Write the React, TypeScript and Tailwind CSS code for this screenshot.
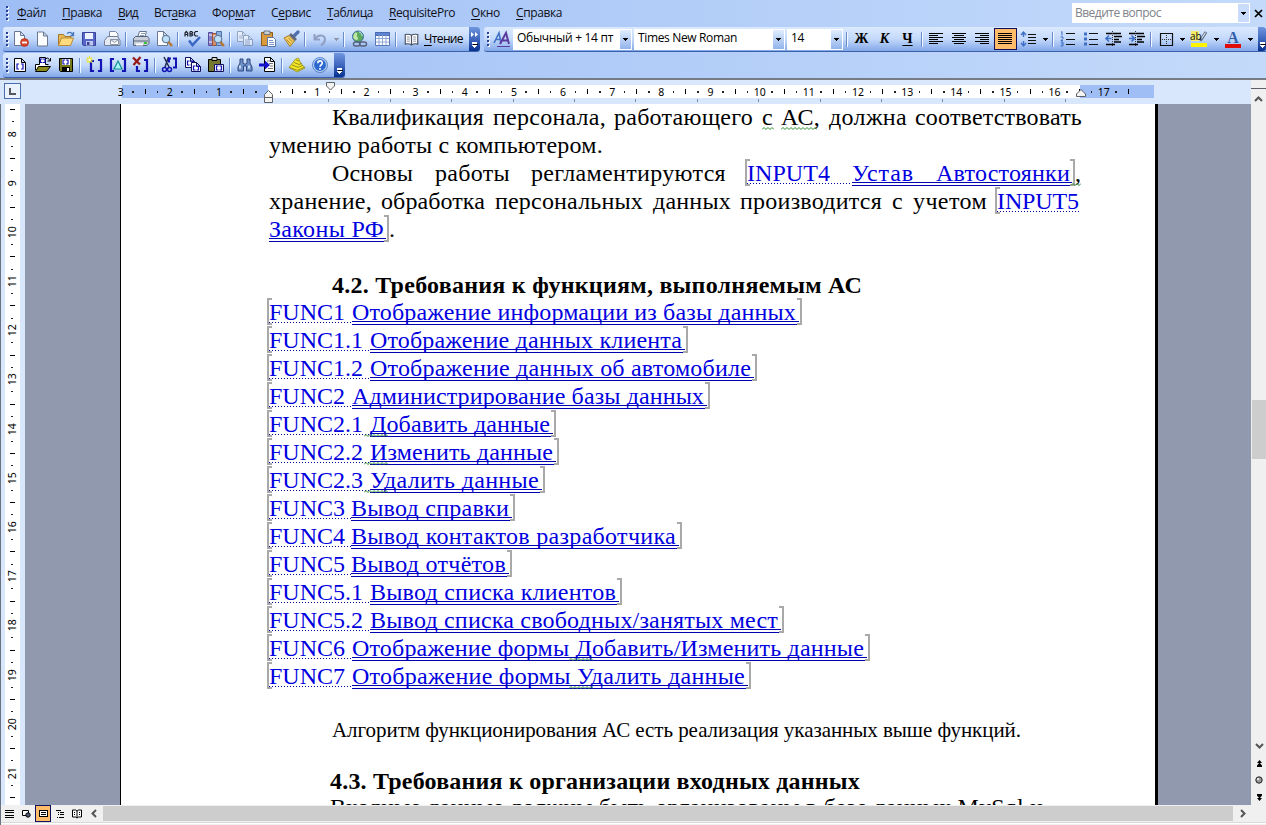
import { useLayoutEffect, useRef } from "react";
import type { ReactNode } from "react";

/* Spreads its text over the width that its class gives. */
function Fit({ className, children }: { className: string; children: ReactNode }) {
  const outer = useRef<HTMLSpanElement>(null);
  const inner = useRef<HTMLSpanElement>(null);
  useLayoutEffect(() => {
    const o = outer.current;
    const i = inner.current;
    if (!o || !i) return;
    i.style.letterSpacing = "0px";
    const count = (i.textContent || "").length || 1;
    const gap = o.getBoundingClientRect().width - i.getBoundingClientRect().width;
    i.style.letterSpacing = `${gap / count}px`;
  });
  return (
    <span ref={outer} className={`inline-block shrink-0 whitespace-pre ${className}`}>
      <span ref={inner} className="inline-block whitespace-pre">{children}</span>
    </span>
  );
}

function U({ children }: { children: ReactNode }) {
  return <span className="underline underline-offset-2">{children}</span>;
}

function Handle() {
  return (
    <span className="flex w-[7px] shrink-0 flex-col items-center gap-[2px] self-center">
      {[0, 1, 2, 3].map((n) => (
        <span key={n} className="h-[2px] w-[2px] bg-[#27419a] shadow-[1px_1px_0_#fff]" />
      ))}
    </span>
  );
}

function Sep() {
  return (
    <span className="flex w-[6px] shrink-0 justify-center self-center">
      <span className="h-[15px] w-px bg-[#6a8ccb]" />
      <span className="h-[15px] w-px bg-[#f1f9ff]" />
    </span>
  );
}

function Slot({ children, className = "w-[23px]" }: { children: ReactNode; className?: string }) {
  return <span className={`flex shrink-0 items-center justify-center ${className}`}>{children}</span>;
}

function Down({ dim = false }: { dim?: boolean }) {
  return (
    <svg width="5" height="3" viewBox="0 0 5 3" shapeRendering="crispEdges">
      <path d="M0 0h5L2.5 3z" fill={dim ? "#8d96aa" : "#000"} />
    </svg>
  );
}

function Drop({ dim = false }: { dim?: boolean }) {
  return <Slot className="w-[10px]"><Down dim={dim} /></Slot>;
}

function Svg({ children, size = 18 }: { children: ReactNode; size?: number }) {
  return <svg width={size} height={size} viewBox="0 0 18 18" fill="none">{children}</svg>;
}

function Cap({ chevrons = false, className = "w-[11px]" }: { chevrons?: boolean; className?: string }) {
  return (
    <span className={`flex shrink-0 flex-col items-center justify-between self-stretch rounded-r-[3px] bg-linear-to-b from-[#7096df] via-[#3f67bd] to-[#05318f] pb-[2px] pt-[5px] ${className}`}>
      <svg width="8" height="5" viewBox="0 0 8 5">
        {chevrons && <path d="M0 0l3 2.5L0 5zM4 0l3 2.5L4 5z" fill="#fff" />}
      </svg>
      <svg width="7" height="7" viewBox="0 0 7 7" shapeRendering="crispEdges">
        <path d="M1 0h5v1.500H1zM1 3h5L3.500 6z" fill="#fff" />
        <path d="M2 1.500h5v1H2z" fill="#000" />
      </svg>
    </span>
  );
}

const Page = ({ x = 3.5, y = 2.500, w = 11, h = 13, s = "#6b7890" }: { x?: number; y?: number; w?: number; h?: number; s?: string }) => (
  <path d={`M${x} ${y}h${w - 4}l4 4v${h - 4}h-${w}zM${x + w - 4} ${y}v4h4`} fill="#fbfdff" stroke={s} />
);

const Brackets = ({ x = 6, y = 7, s = 5 }: { x?: number; y?: number; s?: number }) => (
  <path d={`M${x + 2} ${y}h-2v${s}h2M${x + s - 1} ${y}h2v${s}h-2`} stroke="#1414b4" strokeWidth="1.2" />
);

function Lens() {
  return (
    <>
      <circle cx="11" cy="9" r="3.700" fill="#bfe0fa" stroke="#66809c" strokeWidth="1.200" />
      <path d="M13.500 12l3.500 4" stroke="#b4762d" strokeWidth="2.400" />
    </>
  );
}

const standardIcons = {
  permission: (
    <Svg><Page x={2.5} y={1.5} w={10} h={14} /><circle cx="12.500" cy="12.500" r="4" fill="#d8432a" stroke="#a52812" strokeWidth=".6" /><path d="M10 12.500h5" stroke="#fff" strokeWidth="1.800" /></Svg>
  ),
  blank: <Svg><Page x={3.5} y={2} w={10} h={14} /></Svg>,
  open: (
    <Svg>
      <path d="M1.500 15.500v-11h5l1.500 2h6v3" fill="#e8ba53" stroke="#a7772d" />
      <path d="M1.500 15.500l3-7.500h12l-3 7.500z" fill="#ffdb7f" stroke="#b98a36" />
      <path d="M10 3.500c3-2 5-1 6 1.500m.5-3v3.500h-3" stroke="#4777b9" strokeWidth="1.300" />
    </Svg>
  ),
  save: (
    <Svg>
      <path d="M2.500 2.500h13v13h-12l-1-1z" fill="#5565c8" stroke="#3b4197" />
      <path d="M5 3h8v6H5z" fill="#eef2ff" /><path d="M6 11h7v4.500H6z" fill="#c2c8ea" /><path d="M7 12h2.500v3H7z" fill="#3b4197" />
    </Svg>
  ),
  mail: (
    <Svg>
      <path d="M6.500 7V1.500h6l2.500 2.500v4" fill="#fff" stroke="#7b88a4" />
      <path d="M1.500 10.500l3-4h10l2.500 4v5h-15.500z" fill="#e5e9f2" stroke="#737f98" />
      <path d="M7.500 9.500h8v5h-8zM7.500 9.500l4 3 4-3" fill="#fff" stroke="#8a93a8" />
    </Svg>
  ),
  print: (
    <Svg>
      <path d="M5.500 8l2-6.500h7l-2 6.500" fill="#fff" stroke="#68758d" />
      <path d="M1.500 8.500l2-2h12l1.500 2v5l-2 2h-13.500z" fill="#c9d0dc" stroke="#56627a" />
      <path d="M2 11h14" stroke="#56627a" /><path d="M9 3.500h4M8 5.500h4" stroke="#8e9db8" /><path d="M12 12h3v2h-3z" fill="#35c437" /><path d="M4 13.500h7v2H4z" fill="#fff" />
    </Svg>
  ),
  preview: <Svg><Page x={2.5} y={1.5} w={10} h={14} /><Lens /></Svg>,
  spell: (
    <Svg>
      <path d="M5 10.500l3.500 4.500L16 7" stroke="#3b67c4" strokeWidth="2.500" />
      <path d="M1 6.500V3l1.300-1.500L3.700 3v3.500M1 4.500h2.700M6 1.500v4.500h1.700l1-1-1-1.200H6M7.700 3.700l1-1-1-1.200H6M14 1.500h-2.500L10.500 3v2l1 1H14" stroke="#1d222e" strokeWidth="1.200" />
    </Svg>
  ),
  research: (
    <Svg>
      <path d="M1.500 2.500h4v13h-4z" fill="#8580cb" stroke="#574f9e" /><path d="M5.500 3.500h4v12h-4z" fill="#d88c63" stroke="#97543a" />
      <path d="M9.500 1.500h5v14h-5z" fill="#8eb1e4" stroke="#4f70a8" /><path d="M2 5h3M2 12h3M6 6h3" stroke="#fff" /><Lens />
    </Svg>
  ),
  copy: (
    <Svg><g opacity=".55"><Page x={1.5} y={1.5} w={9} h={10} /><Page x={7.5} y={5.5} w={9} h={10} /><path d="M3 6h4M3 8h4M9 10h5M9 12h5M9 14h5" stroke="#7f8aa2" /></g></Svg>
  ),
  paste: (
    <Svg>
      <path d="M2.500 2.500h11v13h-11z" fill="#d99b3c" stroke="#8d5d1d" /><path d="M5 1h6v3.500H5z" fill="#c9ced7" stroke="#596272" strokeWidth=".8" />
      <path d="M8.500 7.500h6l2 2v7h-8z" fill="#fff" stroke="#5b77a8" /><path d="M10 10.500h4M10 12.500h5M10 14.500h5" stroke="#7b97c9" />
    </Svg>
  ),
  painter: (
    <Svg>
      <path d="M16 2l-4 4" stroke="#4f6fae" strokeWidth="3.200" strokeLinecap="round" />
      <path d="M2 8l5-2.500 5.500 5.500L8 16.500z" fill="#f3cf63" stroke="#a67c22" />
      <path d="M4.500 9.500l4.500 4.500M6.500 8l4 4" stroke="#b78a2c" /><path d="M8 4l6 6" stroke="#60677a" strokeWidth="2.600" />
    </Svg>
  ),
  undo: <Svg><path d="M3.500 4v5.500h5.500M4 9c3-5 10-4.500 10 .5 0 3-2 4.500-4 6" stroke="#8f9fc2" strokeWidth="2" /></Svg>,
  link: (
    <Svg>
      <circle cx="8" cy="6.500" r="5.500" fill="#5aa95c" stroke="#3c6da2" /><path d="M4 4c2-3 4-1 3 1s2 2 1 4-4 1-5-2z" fill="#bfe6a7" />
      <path d="M9 2c2 0 3 2 3 4" stroke="#cdeaff" /><rect x="3.500" y="12" width="6.500" height="4" rx="2" stroke="#56627a" strokeWidth="1.400" /><rect x="9.500" y="12" width="7" height="4" rx="2" stroke="#56627a" strokeWidth="1.400" />
    </Svg>
  ),
  table: (
    <Svg>
      <path d="M2.500 2.500h14v13h-14z" fill="#fff" stroke="#5977b9" /><path d="M2.500 2.500h14v3h-14z" fill="#5f86d3" stroke="#4a6bb4" />
      <path d="M6 5v10M9.500 5v10M13 5v10M3 8.500h13M3 12h13" stroke="#8fa9d8" />
    </Svg>
  ),
  book: (
    <Svg size={15}>
      <path d="M9 4C7 2.500 4 2.500 1.500 3v11.500c2.500-.6 5.500-.500 7.500 1 2-1.500 5-1.600 7.500-1V3C14 2.500 11 2.500 9 4zM9 4v11" fill="#fff" stroke="#4a5263" strokeWidth="1.400" />
      <path d="M3.500 6h3.500M3.500 8.500h3.500M3.500 11h3.500M11 6h3.500M11 8.500h3.500M11 11h3.500" stroke="#7b8495" />
    </Svg>
  ),
};

const reqIcons = {
  doc: <Svg><Page x={2.5} y={2.5} w={11} h={13} s="#000" /><Brackets x={5} y={8} s={5} /></Svg>,
  open: (
    <Svg>
      <path d="M1.500 14V8.500h4v-7h6v7h3" fill="#fff" stroke="#000" /><Brackets x={6.5} y={3} s={3.500} />
      <path d="M1.500 15.500l3-5h12l-4 5z" fill="#8a8a19" stroke="#000" /><path d="M12 2.500c2-1 3 0 3.500 2m1-2.500v3h-3" stroke="#000" />
    </Svg>
  ),
  save: (
    <Svg><path d="M2.500 2.500h13v13h-12l-1-1z" fill="#777817" stroke="#000" /><path d="M5 3h8v6H5z" fill="#fff" /><Brackets x={6} y={4} s={4} /><path d="M5 11h8v5H5z" fill="#000" /><path d="M10 12h2v3h-2z" fill="#fff" /></Svg>
  ),
  create: (
    <Svg><path d="M8 5H5v10h3M12 4h3v11h-3" stroke="#1414b4" strokeWidth="2.200" /><path d="M0 4h7M3.500 0v7M1 1.500l5 5M6 1.500l-5 5" stroke="#e8e337" strokeWidth="1.200" /><circle cx="3.500" cy="4" r="1.200" fill="#fff" /></Svg>
  ),
  props: (
    <Svg><path d="M5 3H2v12h3M13 3h3v12h-3" stroke="#1414b4" strokeWidth="2.200" /><path d="M9 5l4 8H5z" fill="#a8f4f4" stroke="#168f94" strokeWidth="1.200" /></Svg>
  ),
  remove: (
    <Svg><path d="M8 15H5v-5M12 4h3v11h-3" stroke="#1414b4" strokeWidth="2.200" /><path d="M1 1.500l7 7M8.500 1l-7 8" stroke="#981818" strokeWidth="2.200" /></Svg>
  ),
  cut: (
    <Svg><path d="M3 1l5 10M7.500 1L4 11" stroke="#222a55" strokeWidth="1.500" /><circle cx="3.500" cy="13.500" r="2" stroke="#1414b4" strokeWidth="1.500" /><circle cx="8.500" cy="13.500" r="2" stroke="#1414b4" strokeWidth="1.500" /><path d="M10 2.500H8v4M12 2.500h3v9h-3" stroke="#1414b4" strokeWidth="2" /></Svg>
  ),
  copy: (
    <Svg><Page x={1.5} y={1.5} w={9} h={10} s="#10105c" /><Brackets x={3.500} y={5} s={4} /><Page x={7.5} y={6.5} w={9} h={9} s="#10105c" /><Brackets x={9.500} y={10} s={4} /></Svg>
  ),
  paste: (
    <Svg><path d="M1.500 3.500h12v12h-12z" fill="#777830" stroke="#000" /><path d="M5 1.500h5v3H5z" fill="#d7d7c5" stroke="#000" /><path d="M7.500 8.500h9v7h-9z" fill="#fff" stroke="#10105c" /><Brackets x={9.500} y={10} s={4} /></Svg>
  ),
  find: (
    <Svg><path d="M4 3h3v4l1 1h2l1-1V3h3v4l2 4v4h-5.500v-5h-3v5H2v-4l2-4z" fill="#6e90c8" stroke="#2f4880" /><path d="M4 9.500v3M13 9.500v3" stroke="#e4efff" strokeWidth="1.500" /></Svg>
  ),
  goto: (
    <Svg><Page x={5.5} y={1.5} w={10} h={14} s="#000" /><path d="M8 5h4M10 7.500h4M11 10h3M9 12.500h5" stroke="#777" /><path d="M0 7.500h6V4.500L11 9l-5 4.500v-3H0z" fill="#1414d0" /></Svg>
  ),
  pro: (
    <Svg>
      <path d="M1 11.500L7.500 3l3-1 2 5 4.500 5-8 4z" fill="#f4e628" stroke="#8b8421" strokeWidth=".7" />
      <path d="M1.500 11.500l8 2.800L17 11M4 9l6 2.300 5-2M6 6.500l5 2 3-1.300M8 4l3 1" stroke="#8d8618" strokeWidth=".9" />
    </Svg>
  ),
  help: (
    <Svg><circle cx="9" cy="9" r="6.700" fill="#2d68cf" stroke="#b6d0f4" strokeWidth="1.500" /><circle cx="9" cy="9" r="7.500" stroke="#3467b4" strokeWidth=".7" /><path d="M6.800 7.200c0-3 4.500-3 4.500-.3C11.300 8.800 9 8.800 9 10.800M9 12v1.700" stroke="#fff" strokeWidth="1.600" /></Svg>
  ),
};

function Lines({ rows, color = "#000" }: { rows: [number, number][]; color?: string }) {
  return (
    <svg width="15" height="14" viewBox="0 0 15 14" shapeRendering="crispEdges">
      {rows.map(([x, w], i) => <rect key={i} x={x} y={1 + i * 2} width={w} height="1" fill={color} />)}
    </svg>
  );
}

const alignLeft: [number, number][] = [[0, 14], [0, 9], [0, 14], [0, 9], [0, 14], [0, 9]];
const alignCenter: [number, number][] = [[0, 14], [2, 10], [0, 14], [2, 10], [0, 14], [2, 10]];
const alignRight: [number, number][] = [[0, 14], [5, 9], [0, 14], [5, 9], [0, 14], [5, 9]];
const alignFull: [number, number][] = [[0, 14], [0, 14], [0, 14], [0, 14], [0, 14], [0, 14]];

function Indent({ right = false }: { right?: boolean }) {
  return (
    <Svg>
      <path d="M1 3.500h15M9 6.500h8M9 9.500h5M9 12h7M1 14.500h9" stroke="#000" strokeWidth="1.500" />
      <path d={right ? "M1 8.500h5M3.500 5.500l3 3-3 3" : "M6.500 8.500h-5M4 5.500l-3 3 3 3"} stroke="#3f6fc7" strokeWidth="1.600" />
      <path d="M7.500 1v16" stroke="#333" strokeDasharray="1 1" />
    </Svg>
  );
}

function Combo({ width, textWidth, children }: { width: string; textWidth: string; children: string }) {
  return (
    <span className={`flex h-[21px] shrink-0 self-center bg-white p-px ${width}`}>
      <span className="flex grow items-center pb-[2px] pl-[3px] text-black"><Fit className={textWidth}>{children}</Fit></span>
      <span className="flex w-[11px] items-center justify-center bg-linear-to-b from-[#e0edfe] to-[#93b4ea]"><Down /></span>
    </span>
  );
}

const bar = "flex h-[25px] items-stretch bg-linear-to-b from-[#dceafe] via-[#c3d9fb] to-[#83a8e8] border-b border-[#3b61ad]";

function Menus() {
  return (
    <div className="flex h-[26px] items-center pl-[3px] text-[#101018]">
      <Handle />
      <div className="flex pl-[7px]">
        <Fit className="mr-4 w-[29px]"><U>Ф</U>айл</Fit>
        <Fit className="mr-4 w-10"><U>П</U>равка</Fit>
        <Fit className="mr-4 w-5"><U>В</U>ид</Fit>
        <Fit className="mr-4 w-[42px]">Вст<U>а</U>вка</Fit>
        <Fit className="mr-4 w-[43px]">Фор<U>м</U>ат</Fit>
        <Fit className="mr-4 w-10">С<U>е</U>рвис</Fit>
        <Fit className="mr-4 w-[46px]"><U>Т</U>аблица</Fit>
        <Fit className="mr-4 w-[66px]"><U>R</U>equisitePro</Fit>
        <Fit className="mr-4 w-[29px]"><U>О</U>кно</Fit>
        <Fit className="w-[46px]"><U>С</U>правка</Fit>
      </div>
      <div className="ml-auto mr-[17px] flex h-[20px] w-[178px] bg-white text-[#80838a]">
        <span className="flex grow items-center pb-px pl-[3px]"><Fit className="w-[86px]">Введите вопрос</Fit></span>
        <span className="m-px flex w-[11px] items-center justify-center bg-[#c9dcfb]"><Down /></span>
      </div>
      <svg className="-ml-[13px] mr-[3px]" width="9" height="9" viewBox="0 0 9 9"><path d="M1 1l7 7M8 1L1 8" stroke="#000" strokeWidth="1.700" /></svg>
    </div>
  );
}

function Toolbars() {
  const s = standardIcons;
  const r = reqIcons;
  return (
    <div className="flex flex-col gap-px pt-px">
      <div className="flex gap-1">
        <div className={`${bar} ml-[3px] w-[477px] rounded-[3px]`}>
          <Handle />
          <Slot className="w-[21px]">{s.permission}</Slot>
          <Slot>{s.blank}</Slot><Slot>{s.open}</Slot><Slot>{s.save}</Slot><Slot>{s.mail}</Slot><Sep />
          <Slot>{s.print}</Slot><Slot>{s.preview}</Slot><Sep />
          <Slot>{s.spell}</Slot><Slot>{s.research}</Slot><Sep />
          <Slot>{s.copy}</Slot><Slot>{s.paste}</Slot><Slot>{s.painter}</Slot><Sep />
          <Slot>{s.undo}</Slot><Drop dim /><Sep />
          <Slot>{s.link}</Slot><Slot>{s.table}</Slot><Sep />
          <Slot className="w-[25px]">{s.book}</Slot>
          <Slot className="w-[45px] pr-[6px]"><Fit className="w-[39px]"><U>Ч</U>тение</Fit></Slot>
          <Cap chevrons />
        </div>
        <div className={`${bar} grow rounded-l-[3px]`}>
          <Handle />
          <Slot className="w-[22px]">
            <Svg><path d="M1 13L6 3l2 10M3 9.500h4" stroke="#4472c4" strokeWidth="1.600" /><path d="M7 14l6-11 3 11M9 10.500h6" stroke="#5b3c9e" strokeWidth="2" /><path d="M4 16.500h13" stroke="#5b3c9e" /></Svg>
          </Slot>
          <Combo width="w-[119px]" textWidth="w-[96px]">Обычный + 14 пт</Combo>
          <span className="w-[2px]" />
          <Combo width="w-[151px]" textWidth="w-[99px]">Times New Roman</Combo>
          <span className="w-[2px]" />
          <Combo width="w-[56px]" textWidth="w-[13px]">14</Combo>
          <span className="w-px" />
          <Sep />
          <Slot className="w-[23px] font-['Liberation_Serif',serif] text-[14px] font-bold">Ж</Slot>
          <Slot className="w-[23px] font-['Liberation_Serif',serif] text-[14px] font-bold italic">К</Slot>
          <Slot className="w-[23px] font-['Liberation_Serif',serif] text-[14px] font-bold underline underline-offset-2">Ч</Slot>
          <Sep />
          <Slot><Lines rows={alignLeft} /></Slot>
          <Slot><Lines rows={alignCenter} /></Slot>
          <Slot><Lines rows={alignRight} /></Slot>
          <Slot className="my-[1px] w-[23px] border border-[#10105c] bg-[#ffbd69]"><Lines rows={alignFull} /></Slot>
          <Slot>
            <Svg><path d="M3.500 2v5M1 5l2.500-3L6 5M3.500 11v5M1 13l2.500 3L6 13" stroke="#3f6fc7" strokeWidth="1.400" /><path d="M8 4.500h8M8 7.500h8M8 10.500h8M8 13.500h8" stroke="#111" /></Svg>
          </Slot>
          <Drop /><Sep />
          <Slot>
            <Svg><path d="M3 1.500v4M2 2h1M1.500 7h2.500v1.500L2 10.500h2M1.500 12h2.500v4H1.500M2 14h2" stroke="#3f6fc7" /><path d="M7 3.500h9M7 9.500h9M7 14.500h9" stroke="#111" /></Svg>
          </Slot>
          <Slot>
            <Svg><path d="M2 2.500h3v3H2zM2 7.500h3v3H2zM2 12.500h3v3H2z" fill="#3f6fc7" /><path d="M7 3.500h9M7 9.500h9M7 14.500h9" stroke="#111" /></Svg>
          </Slot>
          <Slot><Indent /></Slot><Slot><Indent right /></Slot><Sep />
          <Slot>
            <Svg><path d="M3.500 3.500h12v12h-12z" stroke="#111" strokeWidth="1.200" /><path d="M9.500 5v10M5 9.500h10" stroke="#333" strokeDasharray="1 1" /></Svg>
          </Slot>
          <Drop />
          <Slot className="w-[24px]">
            <Svg>
              <path d="M1 1h8v10H1z" fill="#f5ee67" /><path d="M16 2l-4 6-2 2.500" stroke="#59687f" strokeWidth="3" /><path d="M15.500 2.500l-4 6" stroke="#dfe8f4" strokeWidth="1.200" />
              <path d="M1 13h16v4H1z" fill="#fff500" />
              <text x="0" y="9.500" fontSize="10" fill="#111">ab</text>
            </Svg>
          </Slot>
          <Drop />
          <Slot className="w-[24px]">
            <span className="flex flex-col items-center">
              <span className="h-[13px] font-['Liberation_Serif',serif] text-[16px] font-bold leading-[14px] text-[#355fae]">A</span>
              <span className="h-[4px] w-4 bg-[#e00b0b]" />
            </span>
          </Slot>
          <Drop />
          <Cap className="ml-auto w-2" />
        </div>
      </div>
      <div className={`${bar} ml-[3px] w-[342px] rounded-[3px]`}>
        <Handle />
        <Slot className="w-[21px]">{r.doc}</Slot><Slot>{r.open}</Slot><Slot>{r.save}</Slot><Sep />
        <Slot>{r.create}</Slot><Slot>{r.props}</Slot><Slot>{r.remove}</Slot><Sep />
        <Slot>{r.cut}</Slot><Slot>{r.copy}</Slot><Slot>{r.paste}</Slot><Sep />
        <Slot>{r.find}</Slot><Slot>{r.goto}</Slot><Sep />
        <Slot>{r.pro}</Slot><Slot>{r.help}</Slot>
        <Cap className="ml-auto w-[11px]" />
      </div>
    </div>
  );
}

const hCells = [3, 2, 1, 0, 1, 2, 3, 4, 5, 6, 7, 8, 9, 10, 11, 12, 13, 14, 15, 16, 17];
const vCells = [8, 9, 10, 11, 12, 13, 14, 15, 16, 17, 18, 19, 20, 21];
const tabStops = Array.from({ length: 13 }, (_, n) => n);

function HorizontalRuler() {
  return (
    <div className="flex h-6 bg-[#d8e7fc]">
      <div className="flex w-[122px] shrink-0 pl-1 pt-[3px]">
        <span className="flex h-4 w-[17px] items-center justify-center border border-[#4a6cb0] bg-[#eaf2fe]">
          <svg width="7" height="7" viewBox="0 0 7 7" shapeRendering="crispEdges"><path d="M1 0v6h6" fill="none" stroke="#55565c" strokeWidth="2" /></svg>
        </span>
      </div>
      <div className="relative flex w-[1129px] shrink-0 flex-col pt-[5px]">
        <div className="flex h-[13px]">
          <span className="w-[146px] bg-[#9ebef5]" />
          <span className="w-[812px] bg-white" />
          <span className="w-[74px] bg-[#9ebef5]" />
        </div>
        <div className="flex h-[4px] pl-[146px] pt-px">
          {tabStops.map((n) => <span key={n} className="box-border h-[3px] w-[61.4px] border-r border-[#7d8ba8]" />)}
        </div>
        <div className="absolute -left-[7.5px] top-[5px] flex h-[13px] items-center font-['Noto_Sans',sans-serif] text-[10.5px] text-black">
          {hCells.map((n, i) => (
            <span key={i} className="flex w-[49.17px] shrink-0 items-center">
              <span className="flex w-[12.29px] justify-center">{n === 0 ? "" : n}</span>
              <span className="flex w-[12.29px] justify-center"><span className="h-[2px] w-[1.500px] bg-[#222]" /></span>
              <span className="flex w-[12.29px] justify-center"><span className="h-[5px] w-px bg-black" /></span>
              <span className="flex w-[12.29px] justify-center">{i < 20 && <span className="h-[2px] w-[1.500px] bg-[#222]" />}</span>
            </span>
          ))}
        </div>
        <svg className="absolute left-[142px] top-[10px]" width="9" height="14" viewBox="0 0 9 14"><path d="M.5 7.500V4.500l4-4 4 4v3zM.5 7.500h8v5h-8z" fill="#f4f4f2" stroke="#5d6068" /></svg>
        <svg className="absolute left-[204px] top-[2px]" width="9" height="10" viewBox="0 0 9 10"><path d="M.5.5h8v3.500l-4 4-4-4z" fill="#f4f4f2" stroke="#5d6068" /></svg>
        <svg className="absolute left-[954px] top-[9px]" width="10" height="9" viewBox="0 0 10 9"><path d="M.5 7.500V5l4.500-4.500L9.500 5v2.500z" fill="#f4f4f2" stroke="#5d6068" /></svg>
      </div>
      <div className="flex grow flex-col bg-[#f0f0f0]">
        <span className="h-[9px] border-b border-[#5d6068] bg-[#f0f0f0]" />
        <span className="flex grow items-center justify-center pt-1">
          <svg width="9" height="6" viewBox="0 0 9 6"><path d="M1 5l3.500-3.500L8 5" fill="none" stroke="#555" strokeWidth="2" /></svg>
        </span>
      </div>
    </div>
  );
}

function VerticalRuler() {
  return (
    <div className="flex w-[25px] shrink-0 border-l border-[#6a7282] bg-[#d8e7fc] pl-1">
      <div className="flex w-[15px] flex-col items-center overflow-hidden bg-white font-['Noto_Sans',sans-serif] text-[10.5px] text-black">
        <span className="flex h-[11.3px] shrink-0 items-center"><span className="h-px w-[5px] bg-black" /></span>
        <span className="flex h-[12.32px] shrink-0 items-center"><span className="h-px w-[2px] bg-[#222]" /></span>
        {vCells.map((n) => (
          <span key={n} className="flex shrink-0 flex-col items-center">
            <span className="flex h-[12.3px] items-center justify-center"><span className="-rotate-90 leading-none">{n}</span></span>
            <span className="flex h-[12.3px] items-center"><span className="h-px w-[2px] bg-[#222]" /></span>
            <span className="flex h-[12.3px] items-center"><span className="h-px w-[5px] bg-black" /></span>
            <span className="flex h-[12.3px] items-center"><span className="h-px w-[2px] bg-[#222]" /></span>
          </span>
        ))}
      </div>
    </div>
  );
}

function Bracket({ right = false, className }: { right?: boolean; className: string }) {
  return (
    <svg className={`absolute top-0 ${className}`} width="5" height="27" viewBox="0 0 5 27">
      <path d={right ? "M0 1h4v25H0" : "M5 1H1v25h4"} fill="none" stroke="#a9a9a9" strokeWidth="2" />
    </svg>
  );
}

function Squiggle({ className, width }: { className: string; width: number }) {
  let d = "M0 2.500";
  for (let x = 2; x <= width; x += 2) d += `L${x} ${(x / 2) % 2 ? 0.5 : 2.5}`;
  return <svg className={`absolute top-[24px] ${className}`} width={width} height="3" viewBox={`0 0 ${width} 3`}><path d={d} fill="none" stroke="#2e8b2e" /></svg>;
}

const dots = "absolute left-0 top-[24px] h-px bg-[repeating-linear-gradient(90deg,#0000a0_0_1px,transparent_1px_3px)]";
const rules = "absolute left-0 top-[23px] h-1 border-y border-[#0000b0]";

interface Req { tag: string; tagText: string; tagBox: string; desc: string; width: string; mark?: string }

const short = { tagText: "w-[76px]", tagBox: "w-[83px]" };
const shorter = { tagText: "w-[76px]", tagBox: "w-[82px]" };
const long = { tagText: "w-[94px]", tagBox: "w-[101px]" };

const requirements: Req[] = [
  { tag: "FUNC1", ...short, desc: "Отображение информации из базы данных", width: "w-[444px]" },
  { tag: "FUNC1.1", ...long, desc: "Отображение данных клиента", width: "w-[312px]" },
  { tag: "FUNC1.2", ...long, desc: "Отображение данных об автомобиле", width: "w-[381px]" },
  { tag: "FUNC2", ...short, desc: "Администрирование базы данных", width: "w-[352px]" },
  { tag: "FUNC2.1", ...long, desc: "Добавить данные", width: "w-[180px]", mark: "-left-1.5" },
  { tag: "FUNC2.2", ...long, desc: "Изменить данные", width: "w-[183px]", mark: "-left-1.5" },
  { tag: "FUNC2.3", ...long, desc: "Удалить данные", width: "w-[169px]", mark: "-left-1.5" },
  { tag: "FUNC3", ...shorter, desc: "Вывод справки", width: "w-[158px]" },
  { tag: "FUNC4", ...shorter, desc: "Вывод контактов разработчика", width: "w-[325px]" },
  { tag: "FUNC5", ...shorter, desc: "Вывод отчётов", width: "w-[155px]" },
  { tag: "FUNC5.1", ...long, desc: "Вывод списка клиентов", width: "w-[246px]" },
  { tag: "FUNC5.2", ...long, desc: "Вывод списка свободных/занятых мест", width: "w-[408px]" },
  { tag: "FUNC6", ...short, desc: "Отображение формы Добавить/Изменить данные", width: "w-[512px]", mark: "left-[217px]" },
  { tag: "FUNC7", ...short, desc: "Отображение формы Удалить данные", width: "w-[393px]", mark: "left-[217px]" },
];

function Requirement({ item }: { item: Req }) {
  return (
    <div className="flex h-7 text-[#0000e0]">
      <span className={`relative ${item.tagBox}`}>
        <Bracket className="-left-[2px]" />
        <Fit className={item.tagText}>{item.tag}</Fit>
        <span className={`${dots} w-full`} />
      </span>
      <span className={`relative ${item.width}`}>
        <Fit className="w-full">{item.desc}</Fit>
        <span className={`${rules} -right-[3px]`} />
        {item.mark && <Squiggle className={item.mark} width={24} />}
        <Bracket right className="-right-[6px]" />
      </span>
    </div>
  );
}

function DocumentText() {
  return (
    <div className="-mt-px ml-[148px] w-[814px] font-['Liberation_Serif','Times_New_Roman',serif] text-[24px] leading-7 text-black">
      <div className="flex h-7 pl-[63px]">
        <Fit className="mr-[9px] w-[152px]">Квалификация</Fit>
        <Fit className="mr-2 w-[113px]">персонала,</Fit>
        <Fit className="mr-[9px] w-[139px]">работающего</Fit>
        <span className="relative mr-[9px] w-[10px]"><Fit className="w-[10px]">с</Fit><Squiggle className="left-0" width={12} /></span>
        <span className="relative mr-[9px] w-[39px]"><Fit className="w-[39px]">АС,</Fit><Squiggle className="left-0" width={36} /></span>
        <Fit className="mr-2 w-[78px]">должна</Fit>
        <Fit className="w-[167px]">соответствовать</Fit>
      </div>
      <div className="h-7"><Fit className="w-[334px]">умению работы с компьютером.</Fit></div>
      <div className="flex h-7 pl-[63px]">
        <Fit className="mr-[22px] w-[81px]">Основы</Fit>
        <Fit className="mr-[21px] w-[75px]">работы</Fit>
        <Fit className="mr-[21px] w-[195px]">регламентируются</Fit>
        <span className="relative w-[105px] text-[#0000e0]">
          <Bracket className="-left-[2px]" /><Fit className="w-[83px]">INPUT4</Fit><span className={`${dots} w-full`} />
        </span>
        <span className="relative w-[223px] text-[#0000e0]">
          <Fit className="mr-[22px] w-[62px]">Устав</Fit><Fit className="w-[134px]">Автостоянки</Fit>
          <span className={`${rules} right-[3px]`} /><Bracket right className="right-0" />
        </span>
        <span className="relative w-[6px]">,<Squiggle className="-left-1" width={10} /></span>
      </div>
      <div className="flex h-7">
        <Fit className="mr-[9px] w-[103px]">хранение,</Fit>
        <Fit className="mr-[10px] w-[104px]">обработка</Fit>
        <Fit className="mr-[10px] w-[148px]">персональных</Fit>
        <Fit className="mr-[9px] w-[78px]">данных</Fit>
        <Fit className="mr-[10px] w-[142px]">производится</Fit>
        <Fit className="mr-[10px] w-[11px]">с</Fit>
        <Fit className="mr-[10px] w-[74px]">учетом</Fit>
        <span className="relative w-[82px] text-[#0000e0]">
          <Bracket className="-left-[2px]" /><Fit className="w-[82px]">INPUT5</Fit><span className={`${dots} w-full`} />
        </span>
      </div>
      <div className="flex h-7">
        <span className="relative w-[115px] text-[#0000e0]">
          <Fit className="w-full">Законы РФ</Fit><span className={`${rules} -right-[2px]`} /><Bracket right className="-right-[5px]" />
        </span>
        <span className="pl-[5px]">.</span>
      </div>
      <div className="mt-7 h-[27px] pl-[63px] font-bold"><Fit className="w-[530px]">4.2. Требования к функциям, выполняемым АС</Fit></div>
      {requirements.map((item) => <Requirement key={item.tag} item={item} />)}
      <div className="mt-[26px] h-7 pl-[63px] text-[21px]"><Fit className="w-[689px]">Алгоритм функционирования АС есть реализация указанных выше функций.</Fit></div>
      <div className="mt-[23px] h-[26px] pl-[61px] font-bold"><Fit className="w-[530px]">4.3. Требования к организации входных данных</Fit></div>
      <div className="h-7 pl-[61px]"><Fit className="w-[713px]">Входные данные должны быть организованы в базе данных MySql и</Fit></div>
    </div>
  );
}

function VerticalScroll() {
  return (
    <div className="flex grow flex-col items-center bg-[#f0f0f0] pl-px">
      <span className="mt-[296px] h-[59px] w-full shrink-0 bg-[#cdcdcd]" />
      <svg className="mt-[284px]" width="9" height="6" viewBox="0 0 9 6"><path d="M1 1l3.500 3.500L8 1" fill="none" stroke="#555" strokeWidth="2" /></svg>
      <svg className="mt-[11px]" width="7" height="7" viewBox="0 0 7 7"><path d="M3.500 0l2.500 3H1zM3.500 2.500L6 5.500H1zM1 5.500h5V7H1z" fill="#000" /></svg>
      <svg className="mt-[9px]" width="8" height="8" viewBox="0 0 8 8"><circle cx="4" cy="4" r="3.200" fill="#9a9a9a" stroke="#222" /><circle cx="3" cy="3" r="1" fill="#fff" /></svg>
      <svg className="mt-[10px]" width="7" height="7" viewBox="0 0 7 7"><path d="M1 0h5v1.500H1zM1 1.500h5l-2.500 3zM1 4h5L3.500 7z" fill="#000" /></svg>
    </div>
  );
}

function BottomBar() {
  return (
    <div className="flex h-5 flex-col border-l border-[#6a7282] bg-[#f0f0f0]">
      <div className="flex h-[17px] items-center">
        <Slot className="w-[17px]"><svg width="9" height="9" shapeRendering="crispEdges"><path d="M0 1h9M0 3.500h9M0 6h9M0 8.500h9" stroke="#000" /></svg></Slot>
        <Slot className="w-[17px]"><svg width="9" height="9" viewBox="0 0 9 9"><path d="M.5 1.500h6v5h-6z" fill="#fff" stroke="#000" /><circle cx="6" cy="6" r="2.200" fill="#555c77" stroke="#000" /></svg></Slot>
        <Slot className="h-[17px] w-[16px] border border-[#10105c] bg-[#ffbd69]"><svg width="9" height="9" viewBox="0 0 9 9" shapeRendering="crispEdges"><path d="M.5 1.500h8v6h-8z" fill="#fff" stroke="#000" /><path d="M2 3.500h5M2 5.500h5" stroke="#000" /></svg></Slot>
        <Slot className="w-[18px]"><svg width="9" height="9" viewBox="0 0 9 9" shapeRendering="crispEdges"><path d="M0 1.500h5M2 3.500h1M4 3.500h4M2 5.500h1M4 5.500h4M1 8h1M3 8h5" stroke="#000" /></svg></Slot>
        <Slot className="w-[15px]"><svg width="10" height="10" viewBox="0 0 10 10"><path d="M5 2L3.500 1h-3v7h3L5 9l1.500-1h3V1h-3zM5 2v7M2 3.500h1M2 5.500h1M7 3.500h1M7 5.500h1" fill="#fff" stroke="#000" /></svg></Slot>
        <Slot className="w-[19px]"><svg width="6" height="9" viewBox="0 0 6 9"><path d="M5 1L1.500 4.500 5 8" fill="none" stroke="#555" strokeWidth="2" /></svg></Slot>
        <span className="h-[15px] w-[1130px] bg-[#cdcdcd]" />
        <Slot className="w-[19px]"><svg width="6" height="9" viewBox="0 0 6 9"><path d="M1 1l3.500 3.500L1 8" fill="none" stroke="#555" strokeWidth="2" /></svg></Slot>
      </div>
      <span className="h-px bg-[#dadada]" />
      <span className="h-px bg-white" />
    </div>
  );
}

export default function App() {
  return (
    <div className="flex h-[825px] w-[1266px] flex-col overflow-hidden bg-[#9099ae] font-['Open_Sans','Noto_Sans',sans-serif] text-[12px] leading-4">
      <header className="flex h-20 shrink-0 flex-col border-b-2 border-[#777b83] bg-linear-to-r from-[#9ebef5] to-[#c4dafa]">
        <Menus />
        <Toolbars />
      </header>
      <HorizontalRuler />
      <main className="flex h-[701px] shrink-0 overflow-hidden">
        <VerticalRuler />
        <div className="w-[95px] shrink-0" />
        <article className="w-[1038px] shrink-0 overflow-hidden border-l border-r-[3px] border-black bg-white">
          <DocumentText />
        </article>
        <div className="w-[93px] shrink-0" />
        <VerticalScroll />
      </main>
      <BottomBar />
    </div>
  );
}
